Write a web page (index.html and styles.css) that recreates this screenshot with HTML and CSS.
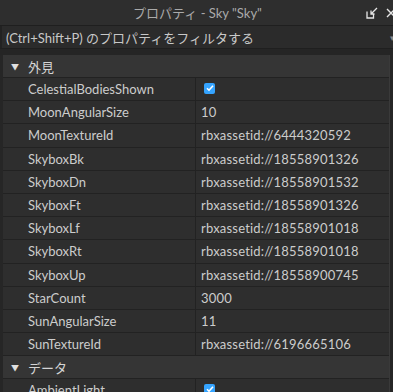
FILE: index.html
```html
<!DOCTYPE html>
<html lang="ja">
<head>
  <meta charset="UTF-8">
  <title>プロパティ - Sky "Sky"</title>
  <link rel="stylesheet" href="styles.css">
</head>
<body>
  <div class="panel">
    <div class="titlebar">
      <span class="title">プロパティ - Sky "Sky"</span>
      <div class="title-icons">
        <svg width="12" height="12" viewBox="0 0 12 12"><path d="M1 4.5v6.5h6.5M1 11h6.5V7" fill="none" stroke="#e6e6e6" stroke-width="1.3"/><path d="M11 1L5.5 6.5M5 3.5v3.5h3.5" fill="none" stroke="#e6e6e6" stroke-width="1.3"/></svg>
        <svg width="10" height="10" viewBox="0 0 10 10"><path d="M1 1l8 8M9 1l-8 8" stroke="#e6e6e6" stroke-width="1.4"/></svg>
      </div>
    </div>

    <div class="filter">
      <span>(Ctrl+Shift+P) のプロパティをフィルタする</span>
      <span class="filter-arrow">▾</span>
    </div>

    <div class="grid">
      <div class="rows">
        <div class="section"><span class="caret">▼</span>外見</div>
        <div class="row"><div class="name">CelestialBodiesShown</div><div class="value"><span class="check"><svg width="10" height="10" viewBox="0 0 10 10"><path d="M2 5.2l2 2 4-4.4" fill="none" stroke="#fff" stroke-width="1.6"/></svg></span></div></div>
        <div class="row"><div class="name">MoonAngularSize</div><div class="value">10</div></div>
        <div class="row"><div class="name">MoonTextureId</div><div class="value">rbxassetid://6444320592</div></div>
        <div class="row"><div class="name">SkyboxBk</div><div class="value">rbxassetid://18558901326</div></div>
        <div class="row"><div class="name">SkyboxDn</div><div class="value">rbxassetid://18558901532</div></div>
        <div class="row"><div class="name">SkyboxFt</div><div class="value">rbxassetid://18558901326</div></div>
        <div class="row"><div class="name">SkyboxLf</div><div class="value">rbxassetid://18558901018</div></div>
        <div class="row"><div class="name">SkyboxRt</div><div class="value">rbxassetid://18558901018</div></div>
        <div class="row"><div class="name">SkyboxUp</div><div class="value">rbxassetid://18558900745</div></div>
        <div class="row"><div class="name">StarCount</div><div class="value">3000</div></div>
        <div class="row"><div class="name">SunAngularSize</div><div class="value">11</div></div>
        <div class="row"><div class="name">SunTextureId</div><div class="value">rbxassetid://6196665106</div></div>
        <div class="section"><span class="caret">▼</span>データ</div>
        <div class="row"><div class="name">AmbientLight</div><div class="value"><span class="check"><svg width="10" height="10" viewBox="0 0 10 10"><path d="M2 5.2l2 2 4-4.4" fill="none" stroke="#fff" stroke-width="1.6"/></svg></span></div></div>
      </div>
      <div class="scrollbar"></div>
    </div>
  </div>
</body>
</html>
```

FILE: styles.css
```css
:root {
  --panel-bg: #2e2e2e;
  --row-bg: #2e2e2e;
  --section-bg: #353535;
  --line: #222222;
  --text: #cccccc;
  --muted: #aaaaaa;
  --accent: #35a4ff;
}

* {
  box-sizing: border-box;
}

body {
  margin: 0;
  background: #262626;
  font-family: "Lato", "Noto Sans CJK JP", sans-serif;
  font-size: 13px;
  color: var(--text);
  overflow: hidden;
}

.panel {
  width: 393px;
  height: 392px;
  display: flex;
  flex-direction: column;
  background: #252525;
}

.titlebar {
  height: 26px;
  flex-shrink: 0;
  background: var(--panel-bg);
  border-bottom: 1px solid #1f1f1f;
  display: flex;
  align-items: center;
  justify-content: center;
  position: relative;
}

.title {
  color: var(--muted);
  font-size: 13px;
  margin-left: 2px;
}

.title-icons {
  position: absolute;
  right: -3px;
  top: 7px;
  display: flex;
  gap: 8px;
  align-items: center;
}

.filter {
  height: 23px;
  flex-shrink: 0;
  background: #2b2b2b;
  border-left: 2px solid #222;
  border-bottom: 1px solid #1f1f1f;
  display: flex;
  align-items: center;
  justify-content: space-between;
  padding: 0 0 0 4px;
  color: #c8c8c8;
}

.filter-arrow {
  color: #888;
  font-size: 9px;
  margin-right: -2px;
}

.grid {
  margin-top: 6px;
  flex: 1;
  display: flex;
  overflow: hidden;
  border-left: 3px solid #262626;
}

.rows {
  flex: 1;
  display: flex;
  flex-direction: column;
}

.section {
  height: 23px;
  flex-shrink: 0;
  background: var(--section-bg);
  border-bottom: 1px solid var(--line);
  display: flex;
  align-items: center;
  padding-left: 8px;
  color: #d4d4d4;
}

.caret {
  font-size: 8px;
  color: #e0e0e0;
  width: 17px;
}

.row {
  height: 23.2px;
  flex-shrink: 0;
  display: flex;
  background: var(--row-bg);
  border-bottom: 1px solid var(--line);
}

.name {
  width: 193px;
  padding-left: 25px;
  border-right: 1px solid var(--line);
  display: flex;
  align-items: center;
  white-space: nowrap;
}

.value {
  flex: 1;
  padding-left: 5px;
  display: flex;
  align-items: center;
  white-space: nowrap;
  letter-spacing: 0.2px;
}

.check {
  width: 11px;
  height: 11px;
  margin-left: 3px;
  margin-top: -2px;
  border-radius: 2px;
  background: var(--accent);
  display: flex;
  align-items: center;
  justify-content: center;
}

.scrollbar {
  width: 4px;
  flex-shrink: 0;
  background: #262626;
  border-left: 1px solid #3a3a3a;
}
```
